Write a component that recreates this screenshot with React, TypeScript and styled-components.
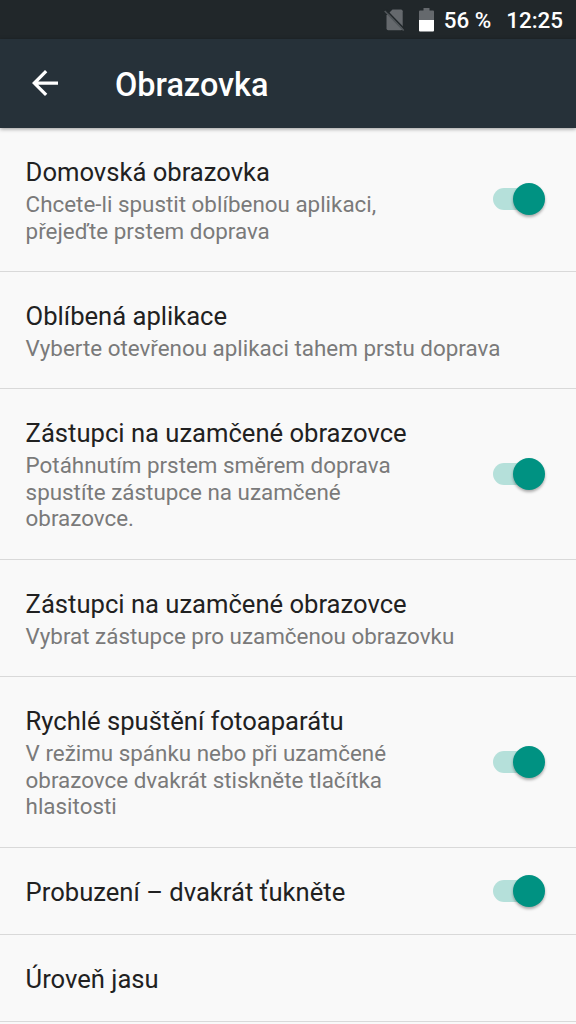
import React from 'react';
import styled, { createGlobalStyle } from 'styled-components';

const Global = createGlobalStyle`
  * { box-sizing: border-box; }
  html, body { margin: 0; padding: 0; background: #f9f9f9; overflow: hidden; }
`;

const Screen = styled.main`
  width: 576px;
  height: 1024px;
  overflow: hidden;
  display: flex;
  flex-direction: column;
  background: #f9f9f9;
  font-family: Roboto, sans-serif;
  color: #212121;
`;

const StatusBar = styled.div`
  flex: none;
  height: 39px;
  display: flex;
  align-items: center;
  justify-content: flex-end;
  padding: 1px 13px 0 0;
  background: #21272a;
  color: #fff;
  font-size: 22.4px;
  font-weight: 500;
  white-space: nowrap;
`;

const SimIcon = styled.svg`
  width: 21px;
  height: 24px;
  margin: -1px 14px 0 0;
`;

const BatteryIcon = styled.svg`
  width: 15px;
  height: 24px;
  margin: -1px 10px 0 0;
`;

const Percent = styled.span`
  margin-right: 15px;
`;

const AppBar = styled.header`
  flex: none;
  height: 89px;
  display: flex;
  align-items: center;
  padding: 3px 0 0 32px;
  background: #263139;
  color: #fff;
  box-shadow: 0 1px 4px rgba(0, 0, 0, 0.4);
  z-index: 1;
`;

const BackIcon = styled.svg`
  width: 26px;
  height: 26px;
  margin: -5px 57px 0 0;
`;

const Title = styled.h1`
  margin: 0;
  font-size: 32.4px;
  font-weight: 500;
  line-height: 38px;
`;

const Row = styled.section<{ $height: number }>`
  flex: none;
  height: ${(p) => p.$height}px;
  display: flex;
  align-items: center;
  justify-content: space-between;
  padding: 0 31px 0 25.6px;
  border-bottom: 1px solid #d9d9d9;
`;

const Texts = styled.div`
  align-self: flex-start;
  padding-top: 29px;
`;

const Label = styled.div`
  font-size: 25.6px;
  line-height: 30px;
  white-space: nowrap;
`;

const Summary = styled.div`
  margin-top: 4.4px;
  font-size: 22.4px;
  line-height: 26.4px;
  color: #7a7a7a;
  white-space: pre;
`;

const Switch = styled.div`
  position: relative;
  width: 52px;
  height: 32px;
  margin-top: -1px;
  display: flex;
  align-items: center;
`;

const Track = styled.div`
  width: 45px;
  height: 22px;
  border-radius: 11px;
  background: #b5e0da;
`;

const Thumb = styled.div`
  position: absolute;
  right: 0;
  top: 0;
  width: 32px;
  height: 32px;
  border-radius: 50%;
  background: #009282;
  box-shadow: 0 2px 3px rgba(0, 0, 0, 0.32);
`;

const rows = [
  { label: 'Domovská obrazovka', summary: 'Chcete-li spustit oblíbenou aplikaci,\npřejeďte prstem doprava', on: true, height: 144 },
  { label: 'Oblíbená aplikace', summary: 'Vyberte otevřenou aplikaci tahem prstu doprava', on: false, height: 117 },
  { label: 'Zástupci na uzamčené obrazovce', summary: 'Potáhnutím prstem směrem doprava\nspustíte zástupce na uzamčené\nobrazovce.', on: true, height: 171 },
  { label: 'Zástupci na uzamčené obrazovce', summary: 'Vybrat zástupce pro uzamčenou obrazovku', on: false, height: 117 },
  { label: 'Rychlé spuštění fotoaparátu', summary: 'V režimu spánku nebo při uzamčené\nobrazovce dvakrát stiskněte tlačítka\nhlasitosti', on: true, height: 171 },
  { label: 'Probuzení – dvakrát ťukněte', summary: '', on: true, height: 87 },
  { label: 'Úroveň jasu', summary: '', on: false, height: 87 },
];

export default function App() {
  return (
    <>
      <Global />
      <Screen>
        <StatusBar>
          <SimIcon viewBox="0 0 21 24" fill="none">
            <path d="M8.500 1.500H17q1.700 0 1.700 1.700V20.500q0 1.700-1.700 1.700H4.200q-1.700 0-1.700-1.700V7.500z" fill="#65696d" />
            <path d="M1.800 1.800l19 19.600" stroke="#21272a" strokeWidth="1.600" />
            <path d="M.7 3l19 19.500" stroke="#505559" strokeWidth="1.600" />
          </SimIcon>
          <BatteryIcon viewBox="0 0 15 24">
            <path d="M4.500 0h6v2.500H14q1 0 1 1V12H0V3.500q0-1 1-1h3.500z" fill="#65696d" />
            <path d="M0 12h15v10.500q0 1-1 1H1q-1 0-1-1z" fill="#fff" />
          </BatteryIcon>
          <Percent>56 %</Percent>
          <span>12:25</span>
        </StatusBar>
        <AppBar>
          <BackIcon viewBox="4 4 16 16" fill="#fff">
            <path d="M20 11H7.830l5.590-5.590L12 4l-8 8 8 8 1.410-1.410L7.830 13H20v-2z" />
          </BackIcon>
          <Title>Obrazovka</Title>
        </AppBar>
        {rows.map((r, i) => (
          <Row key={i} $height={r.height}>
            <Texts>
              <Label>{r.label}</Label>
              {r.summary && <Summary>{r.summary}</Summary>}
            </Texts>
            {r.on && (
              <Switch>
                <Track />
                <Thumb />
              </Switch>
            )}
          </Row>
        ))}
      </Screen>
    </>
  );
}
